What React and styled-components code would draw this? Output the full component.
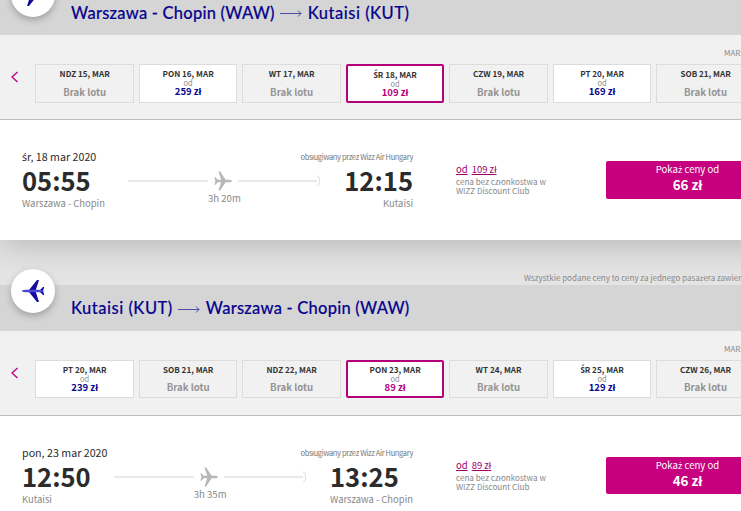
import React from 'react';
import styled, { createGlobalStyle } from 'styled-components';

const GlobalStyle = createGlobalStyle`
  * {
    box-sizing: border-box;
  }
  body {
    margin: 0;
    background: #e4e4e4;
    overflow: hidden;
  }
`;

const Screen = styled.main`
  width: 741px;
  height: 511px;
  overflow: hidden;
  background: #e4e4e4;
  font-family: 'Noto Sans CJK SC', 'Open Sans', sans-serif;
  color: #2b2b2b;
  white-space: nowrap;
`;

const Page = styled.div`
  width: 791px;
  margin-top: -11px;
`;

const Accented = styled.span`
  font-family: 'Noto Sans', 'Open Sans', sans-serif;
  font-size: 0.98em;
  line-height: 0;
`;

const Header = styled.header`
  position: relative;
  display: flex;
  align-items: center;
  height: 46px;
  padding: 1px 0 0 71px;
  background: #d5d5d5;
`;

const Badge = styled.div`
  position: absolute;
  left: 11px;
  top: -16px;
  display: flex;
  align-items: center;
  justify-content: center;
  width: 44px;
  height: 44px;
  border-radius: 50%;
  background: white;
  box-shadow: 0 3px 7px rgba(0, 0, 0, 0.25);

  svg {
    transform: ${({ $outbound }) => ($outbound ? 'rotate(180deg)' : 'none')};
  }
`;

const Title = styled.h2`
  display: flex;
  align-items: center;
  margin: 0;
  font-family: Lato, sans-serif;
  font-size: 16.5px;
  font-weight: 500;
  line-height: 20px;
  color: #06038d;
  -webkit-text-stroke: 0.15px #06038d;

  svg {
    margin: 2px 5.5px 0;
  }
`;

const Place = styled.span`
  letter-spacing: ${({ $long }) => ($long ? '0.24px' : '0.5px')};
`;

const Calendar = styled.div`
  position: relative;
  z-index: 1;
  height: 85px;
  padding: 12px 0 0 11px;
  background: #f1f1f1;
  border-bottom: 1px solid #bdbdbd;
`;

const Month = styled.div`
  height: 17px;
  padding-left: 713px;
  font-size: 8px;
  line-height: 12px;
  color: #8a8a8a;
`;

const Days = styled.div`
  display: flex;
  align-items: center;
`;

const PrevButton = styled.button`
  display: flex;
  flex: none;
  width: 24.3px;
  padding: 0;
  border: 0;
  background: none;
  margin-top: -13px;
`;

const DayCard = styled.div`
  flex: none;
  display: flex;
  flex-direction: column;
  align-items: center;
  width: 98.7px;
  height: 38.7px;
  margin-right: 4.8px;
  padding-top: ${({ $selected }) => ($selected ? '3.6px' : '4px')};
  border: ${({ $selected }) => ($selected ? '2px solid #b5007c' : '1px solid #dcdcdc')};
  border-radius: ${({ $selected }) => ($selected ? '2px' : '0')};
  background: ${({ $empty }) => ($empty ? '#f1f1f1' : 'white')};
`;

const DayName = styled.div`
  font-size: 8.1px;
  font-weight: 700;
  line-height: 10px;
  color: #333;
`;

const From = styled.div`
  height: 6px;
  font-size: 7.5px;
  line-height: 8px;
  color: #8a8a8a;
`;

const DayPrice = styled.div`
  font-size: 9.5px;
  font-weight: 700;
  line-height: 12px;
  color: ${({ $selected }) => ($selected ? '#b5007c' : '#06038d')};
`;

const NoFlight = styled.div`
  margin-top: 6.6px;
  font-size: 9.6px;
  font-weight: 700;
  line-height: 12px;
  color: #949494;
`;

const Flight = styled.div`
  position: relative;
  display: flex;
  height: 120px;
  padding: 29px 0 0 22px;
  background: white;
  box-shadow: 0 4px 32px rgba(0, 0, 0, 0.21);
`;

const Leg = styled.div`
  width: 391px;
`;

const LegTop = styled.div`
  display: flex;
  justify-content: space-between;
  height: 16px;
  line-height: 16px;
`;

const FlightDate = styled.span`
  font-size: 10.7px;
`;

const Operator = styled.span`
  font-size: 7.5px;
  letter-spacing: -0.36px;
  color: #777;
`;

const LegBody = styled.div`
  display: flex;
`;

const Stop = styled.div`
  flex: none;
`;

const Time = styled.div`
  height: 31px;
  font-size: 25.6px;
  font-weight: 700;
  line-height: 30px;
`;

const City = styled.div`
  font-size: 9.45px;
  line-height: 14px;
  text-align: ${({ $align }) => $align};
  color: #888;
`;

const Track = styled.div`
  flex: 1;
  margin: 5px 24px 0 23.5px;
  text-align: center;
`;

const TrackLine = styled.div`
  display: flex;
  align-items: center;
  height: 22px;

  svg {
    flex: none;
  }
`;

const Line = styled.span`
  flex: 1;
  height: 2px;
  background: #e9e9e9;
`;

const PlaneSlot = styled.span`
  display: flex;
  margin: 0 6px;
`;

const Duration = styled.div`
  font-size: 9.6px;
  line-height: 13px;
  color: #888;
`;

const Regular = styled.div`
  width: 150px;
  margin-left: 43px;
  padding-top: 13px;
`;

const RegularPrice = styled.div`
  display: flex;
  gap: 4px;
  height: 15px;
  font-size: 9.5px;
  line-height: 14px;
  color: #a0006d;
`;

const Hint = styled.div`
  font-size: 8.1px;
  line-height: 9px;
  color: #888;
`;

const ShowButton = styled.button`
  display: flex;
  flex-direction: column;
  align-items: center;
  width: 163px;
  height: 37.6px;
  margin-top: 12px;
  padding: 2px 0 0;
  border: 0;
  border-radius: 2px;
  background: #c6007e;
  color: white;
  font-family: inherit;
`;

const ShowLabel = styled.span`
  font-size: 9.6px;
  line-height: 13px;
`;

const ShowPrice = styled.span`
  font-size: 13.4px;
  font-weight: 700;
  line-height: 17px;
`;

const Notice = styled.div`
  position: relative;
  height: 44.8px;
  padding: 32px 0 0 524px;
  font-size: 8px;
  line-height: 12px;
  color: #888;
`;

function Polish({ children }) {
  return children
    .split(/([łśżŚ])/)
    .map((part, i) => (i % 2 ? <Accented key={i}>{part}</Accented> : part));
}

function BadgePlane() {
  return (
    <svg width="24" height="24" viewBox="0 0 24 24">
      <path d="M8 11 L16 1 H18 L14.8 11 V13 L18 23 H16 L8 13 Z" fill="#150a9e" />
      <path d="M19 11 L22 8 H23.2 L22 12 L23.2 16 H22 L19 13 Z" fill="#150a9e" />
      <path d="M0.5 12 Q2 10.7 5 10.7 H20 L23 12 L20 13.3 H5 Q2 13.3 0.5 12 Z" fill="#4a48d6" />
    </svg>
  );
}

function TrackPlane() {
  return (
    <svg width="18" height="20" viewBox="0 0 18 20">
      <path
        d="M18 10 Q17.4 8.8 15.5 8.7 H11.6 L6.2 0.6 H4.4 L7.2 8.7 H3.6 L1.6 6.2 H0.4 L1.4 10 L0.4 13.8 H1.6 L3.6 11.3 H7.2 L4.4 19.4 H6.2 L11.6 11.3 H15.5 Q17.4 11.2 18 10 Z"
        fill="#b8b8b8"
      />
    </svg>
  );
}

function Day({ day, selected }) {
  return (
    <DayCard $selected={selected} $empty={!day.price}>
      <DayName>
        <Polish>{day.name}</Polish>
      </DayName>
      {day.price ? (
        <>
          <From>od</From>
          <DayPrice $selected={selected}>
            <Polish>{day.price}</Polish>
          </DayPrice>
        </>
      ) : (
        <NoFlight>Brak lotu</NoFlight>
      )}
    </DayCard>
  );
}

function Direction({ flight, outbound }) {
  return (
    <section>
      <Header>
        <Badge $outbound={outbound}>
          <BadgePlane />
        </Badge>
        <Title>
          <Place $long={outbound}>{flight.title[0]}</Place>
          <svg width="22" height="9" viewBox="0 0 22 9" fill="none" stroke="#4d4ba6">
            <path d="M0 4.5 H21 M18 1.5 L21 4.5 L18 7.5" />
          </svg>
          <Place $long={!outbound}>{flight.title[1]}</Place>
        </Title>
      </Header>
      <Calendar>
        <Month>MARZEC</Month>
        <Days>
          <PrevButton aria-label="Poprzednie">
            <svg width="8" height="12" viewBox="0 0 8 12" fill="none" stroke="#b5007c" strokeWidth="1.3">
              <path d="M6.5 1 L1 6 L6.5 11" />
            </svg>
          </PrevButton>
          {flight.days.map((day) => (
            <Day key={day.name} day={day} selected={day.name === flight.selected} />
          ))}
        </Days>
      </Calendar>
      <Flight>
        <Leg>
          <LegTop>
            <FlightDate>
              <Polish>{flight.date}</Polish>
            </FlightDate>
            <Operator>
              <Polish>obsługiwany przez Wizz Air Hungary</Polish>
            </Operator>
          </LegTop>
          <LegBody>
            <Stop>
              <Time>{flight.departure}</Time>
              <City $align="left">{flight.from}</City>
            </Stop>
            <Track>
              <TrackLine>
                <Line />
                <PlaneSlot>
                  <TrackPlane />
                </PlaneSlot>
                <Line />
                <svg width="3" height="12" viewBox="0 0 3 12" fill="none" stroke="#dedede">
                  <path d="M0 0.8 Q2.4 1.5 2.4 4 V8 Q2.4 10.5 0 11.2" />
                </svg>
              </TrackLine>
              <Duration>{flight.duration}</Duration>
            </Track>
            <Stop>
              <Time>{flight.arrival}</Time>
              <City $align="right">{flight.to}</City>
            </Stop>
          </LegBody>
        </Leg>
        <Regular>
          <RegularPrice>
            <u>od</u>
            <u>
              <Polish>{flight.price}</Polish>
            </u>
          </RegularPrice>
          <Hint>
            <Polish>cena bez członkostwa w</Polish>
            <br />
            WIZZ Discount Club
          </Hint>
        </Regular>
        <ShowButton>
          <ShowLabel>
            <Polish>Pokaż ceny od</Polish>
          </ShowLabel>
          <ShowPrice>
            <Polish>{flight.clubPrice}</Polish>
          </ShowPrice>
        </ShowButton>
      </Flight>
    </section>
  );
}

const OUTBOUND = {
  title: ['Warszawa - Chopin (WAW)', 'Kutaisi (KUT)'],
  selected: 'ŚR 18, MAR',
  days: [
    { name: 'NDZ 15, MAR' },
    { name: 'PON 16, MAR', price: '259 zł' },
    { name: 'WT 17, MAR' },
    { name: 'ŚR 18, MAR', price: '109 zł' },
    { name: 'CZW 19, MAR' },
    { name: 'PT 20, MAR', price: '169 zł' },
    { name: 'SOB 21, MAR' },
  ],
  date: 'śr, 18 mar 2020',
  departure: '05:55',
  arrival: '12:15',
  from: 'Warszawa - Chopin',
  to: 'Kutaisi',
  duration: '3h 20m',
  price: '109 zł',
  clubPrice: '66 zł',
};

const RETURN = {
  title: ['Kutaisi (KUT)', 'Warszawa - Chopin (WAW)'],
  selected: 'PON 23, MAR',
  days: [
    { name: 'PT 20, MAR', price: '239 zł' },
    { name: 'SOB 21, MAR' },
    { name: 'NDZ 22, MAR' },
    { name: 'PON 23, MAR', price: '89 zł' },
    { name: 'WT 24, MAR' },
    { name: 'ŚR 25, MAR', price: '129 zł' },
    { name: 'CZW 26, MAR' },
  ],
  date: 'pon, 23 mar 2020',
  departure: '12:50',
  arrival: '13:25',
  from: 'Kutaisi',
  to: 'Warszawa - Chopin',
  duration: '3h 35m',
  price: '89 zł',
  clubPrice: '46 zł',
};

function App() {
  return (
    <Screen>
      <GlobalStyle />
      <Page>
        <Direction flight={OUTBOUND} outbound />
        <Notice>
          <Polish>Wszystkie podane ceny to ceny za jednego pasażera zawierają</Polish>
        </Notice>
        <Direction flight={RETURN} />
      </Page>
    </Screen>
  );
}

export default App;
